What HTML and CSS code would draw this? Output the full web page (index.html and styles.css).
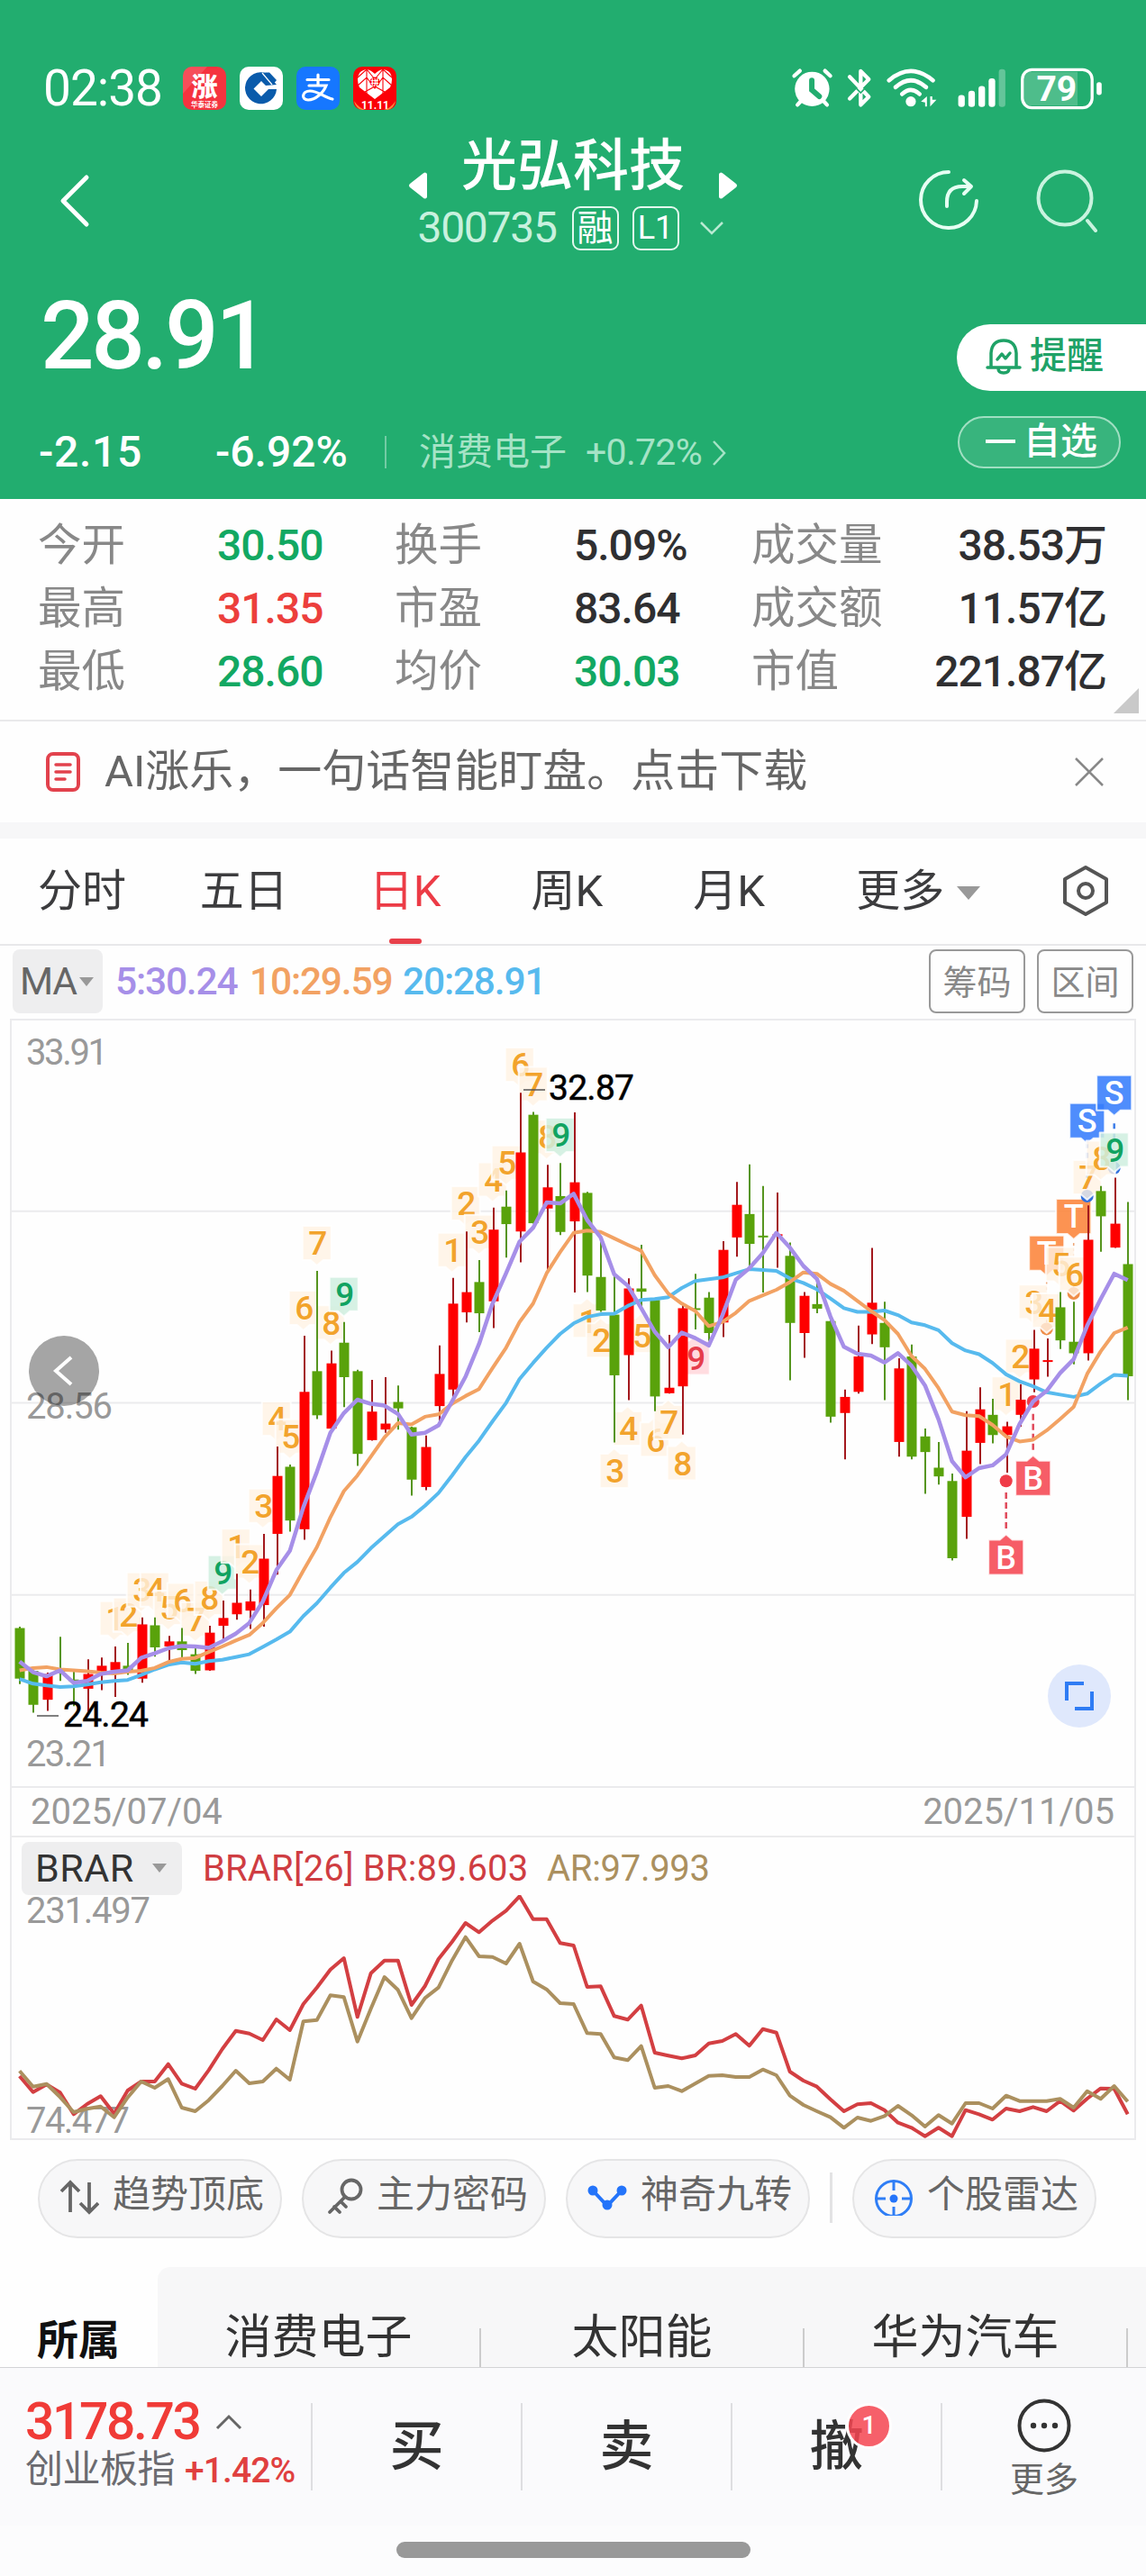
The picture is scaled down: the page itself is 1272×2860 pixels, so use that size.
FILE: index.html
```html
<!DOCTYPE html>
<html lang="zh-CN">

<head>
  <meta charset="UTF-8">
  <meta name="viewport" content="width=device-width, initial-scale=1.0">
  <title>光弘科技 300735</title>
  <link rel="stylesheet" href="styles.css">
</head>

<body>
  <header class="header">
    <div class="status-bar">
      <span class="time">02:38</span>
      <svg class="app-icon" viewBox="0 0 48 48">
        <rect width="48" height="48" rx="10" fill="#f5333f"/>
        <path d="M0 30V10A10 10 0 0 1 10 0H27Z" fill="#fff" opacity=".14"/>
        <text x="24" y="33" font-size="29" font-weight="900" text-anchor="middle" fill="#fff">涨</text>
        <text x="24" y="44.500" font-size="7.500" font-weight="700" text-anchor="middle" fill="#fff">华泰证券</text>
      </svg>
      <svg class="app-icon" viewBox="0 0 48 48">
        <rect width="48" height="48" rx="10" fill="#fff"/>
        <path d="M30 7.500A17.500 17.500 0 1 0 41 25H32L24 33L15.500 24.500L24 16L29 21L41 20Z" fill="#0a5bab"/>
        <path d="M29 6.500H33L41 15L37 20L26 7Z" fill="#0a5bab"/>
        <path d="M25 7L36 20" stroke="#fff" stroke-width="1.200"/>
      </svg>
      <svg class="app-icon" viewBox="0 0 48 48">
        <rect width="48" height="48" rx="10" fill="#1677ff"/>
        <path d="M12 14.500H36M24 9V21M14 21H33C30 29 21 37 13 37C5 37 6 27 15 27C24 27 31 34 40 36" fill="none" stroke="#fff" stroke-width="3.200" stroke-linecap="round"/>
      </svg>
      <svg class="app-icon" viewBox="0 0 48 48">
        <rect width="48" height="48" rx="10" fill="#fb0008"/>
        <path d="M1 38Q6 46 14 48H10Q3 47 1 38ZM47 38Q42 46 34 48H38Q45 47 47 38Z" fill="#ff8a3c"/>
        <path d="M24 36L7 23Q3 14 7 7Q15 -1 24 8Q33 -1 41 7Q45 14 41 23Z" fill="#fff"/>
        <path d="M5 12L15 3L24 14L33 3L43 12M5 21L15 12L24 24L33 12L43 21M13 28L24 22L35 28M15 3V30M33 3V30" fill="none" stroke="#fb0008" stroke-width="1.100"/>
        <circle cx="24" cy="17" r="5.500" fill="#fb0008"/>
        <text x="24" y="20.500" font-size="9" font-weight="700" text-anchor="middle" fill="#fff">拼</text>
        <text x="24.500" y="46.500" font-size="12" font-weight="700" text-anchor="middle" fill="#fff">11.11</text>
      </svg>
      <svg class="system-icons" viewBox="237 76 1041 142">
        <g fill="none" stroke="#fff" stroke-linecap="round" stroke-linejoin="round">
          <path stroke-width="13" d="M244 104L263 87M347 87L365 104M265 190L255 201M344 190L354 201"/>
          <path stroke-width="13" d="M430 107L494 174L467 201V88L494 115L430 180"/>
          <path stroke-width="14" d="M562 119Q635 57 709 119M584 142Q635 96 686 142M606 165Q635 137 664 165"/>
        </g>
        <circle cx="304" cy="148" r="58" fill="#fff"/>
        <path d="M303 119V151L328 173" fill="none" stroke="#22ad6f" stroke-width="18" stroke-linecap="round"/>
        <path d="M452 146L467 161L484 143" stroke="#22ad6f" stroke-width="5" fill="none"/>
        <circle cx="635" cy="190" r="17" fill="#fff"/>
        <path d="M669 190L689 173V207H683V193ZM700 173V207L721 184H707V173Z" fill="#fff"/>
        <g fill="#fff">
          <rect x="794" y="168" width="22" height="40" rx="10"/>
          <rect x="828" y="154" width="22" height="54" rx="10"/>
          <rect x="862" y="138" width="22" height="70" rx="10"/>
          <rect x="896" y="112" width="22" height="96" rx="10"/>
          <rect x="930" y="81" width="22" height="127" rx="10" opacity=".3"/>
          <path d="M1040 90H1194V204H1040Q1014 204 1014 178V116Q1014 90 1040 90Z" opacity=".2"/>
          <rect x="1258" y="125" width="17" height="43" rx="8"/>
        </g>
        <rect x="1009" y="83" width="234" height="128" rx="32" fill="none" stroke="#fff" stroke-width="10"/>
        <text x="1124" y="189" font-size="118" font-weight="700" text-anchor="middle" fill="#fff">79</text>
      </svg>
    </div>

    <div class="title-bar">
      <svg class="back" viewBox="0 0 34 60"><path d="M30 4L4 30L30 56" fill="none" stroke="#fff" stroke-width="5" stroke-linecap="round" stroke-linejoin="round"/></svg>
      <div class="title-center">
        <div class="title-name">
          <svg width="20" height="30" viewBox="0 0 20 30"><path d="M20 2V28Q18 31 15 28L1 17Q-1 15 1 13L15 2Q18-1 20 2Z" fill="#fff"/></svg>
          <h1>光弘科技</h1>
          <svg width="20" height="30" viewBox="0 0 20 30"><path d="M0 2V28Q2 31 5 28L19 17Q21 15 19 13L5 2Q2-1 0 2Z" fill="#fff"/></svg>
        </div>
        <div class="title-code">
          <span>300735</span>
          <b>融</b>
          <b class="level">L1</b>
          <svg width="28" height="16" viewBox="0 0 28 16"><path d="M2 2L14 14L26 2" fill="none" stroke="#b9ead2" stroke-width="2.500"/></svg>
        </div>
      </div>
      <svg class="share" viewBox="0 0 68 68"><path d="M34 3A31 31 0 1 0 65 35M32 41V36Q32 19 49 19H58M51 12L59 19L51 27" fill="none" stroke="#e6fff3" stroke-width="4" stroke-linecap="round" stroke-linejoin="round"/></svg>
      <svg class="search" viewBox="0 0 68 70"><circle cx="32" cy="32" r="29.500" fill="none" stroke="#c9f3df" stroke-width="4"/><path d="M57 57L66 68" stroke="#c9f3df" stroke-width="4" stroke-linecap="round"/></svg>
    </div>

    <div class="quote">
      <div class="price">28.91</div>
      <div class="remind">
        <svg width="40" height="42" viewBox="0 0 40 42"><path d="M6 32V17Q7 3 20 3Q33 3 34 17V32M2 33H38M14 34Q14 39 20 39Q26 39 26 34M13 24L18 18L22 23L27 17" fill="none" stroke="#1fa267" stroke-width="3.500" stroke-linecap="round" stroke-linejoin="round"/></svg>
        <span>提醒</span>
      </div>
    </div>
    <div class="change">
      <span class="diff">-2.15</span>
      <span class="percent">-6.92%</span>
      <span class="industry">消费电子</span>
      <span class="industry-percent">+0.72%</span>
      <svg width="18" height="30" viewBox="0 0 18 30"><path d="M3 2L15 15L3 28" fill="none" stroke="#a5e3c6" stroke-width="2.500"/></svg>
      <div class="favorite"><i></i>自选</div>
    </div>
  </header>

  <section class="stats">
    <span>今开</span><b class="green">30.50</b><span>换手</span><b>5.09%</b><span>成交量</span><b class="last">38.53万</b>
    <span>最高</span><b class="red">31.35</b><span>市盈</span><b>83.64</b><span>成交额</span><b class="last">11.57亿</b>
    <span>最低</span><b class="green">28.60</b><span>均价</span><b class="green">30.03</b><span>市值</span><b class="last">221.87亿</b>
    <i class="corner"></i>
  </section>

  <section class="notice">
    <svg width="38" height="44" viewBox="0 0 38 44"><rect x="2" y="2" width="34" height="40" rx="6" fill="none" stroke="#e2424d" stroke-width="4"/><path d="M11 14H27M11 22H27M11 30H21" stroke="#e2424d" stroke-width="3.500" stroke-linecap="round"/></svg>
    <p>AI涨乐，一句话智能盯盘。点击下载</p>
    <svg width="32" height="32" viewBox="0 0 32 32"><path d="M1 1L31 31M31 1L1 31" stroke="#888" stroke-width="2.500"/></svg>
  </section>

  <nav class="tabs">
    <a>分时</a>
    <a>五日</a>
    <a class="active">日K</a>
    <a>周K</a>
    <a>月K</a>
    <a>更多<i class="caret"></i></a>
    <svg width="54" height="58" viewBox="0 0 54 58"><path d="M27 3L50 16V42L27 55L4 42V16Z" fill="none" stroke="#555" stroke-width="4" stroke-linejoin="round"/><circle cx="27" cy="29" r="8" fill="none" stroke="#555" stroke-width="4"/></svg>
  </nav>

  <div class="ma-bar">
    <span class="ma-select">MA<i class="caret small"></i></span>
    <span class="ma5">5:30.24</span>
    <span class="ma10">10:29.59</span>
    <span class="ma20">20:28.91</span>
    <button class="first">筹码</button>
    <button>区间</button>
  </div>

  <main class="charts">
    <svg id="kline" class="kline" viewBox="13 1133 1246 850"></svg>
    <div class="dates"><span>2025/07/04</span><span>2025/11/05</span></div>
    <div class="brar">
      <div class="brar-head">
        <span class="brar-select">BRAR<i class="caret small"></i></span>
        <span class="br">BRAR[26] BR:89.603</span>
        <span class="ar">AR:97.993</span>
      </div>
      <svg id="brar" class="brar-chart" viewBox="13 2104 1246 270"></svg>
    </div>
  </main>

  <section class="tools">
    <a>
      <svg width="44" height="44" viewBox="0 0 44 44"><path d="M12 40V7M2 17L12 7L22 17M33 7V40M23 30L33 40L43 30" fill="none" stroke="#666" stroke-width="3.800"/></svg>
      趋势顶底
    </a>
    <a>
      <svg width="44" height="44" viewBox="0 0 44 44"><circle cx="31" cy="15" r="10.500" fill="none" stroke="#666" stroke-width="3.800"/><path d="M24 23L7 40M12 34L18 40M19 28L25 34" fill="none" stroke="#666" stroke-width="3.800" stroke-linecap="round"/></svg>
      主力密码
    </a>
    <a>
      <svg width="44" height="44" viewBox="0 0 44 44"><path d="M6 16L22 33L38 16" fill="none" stroke="#2474fa" stroke-width="4"/><g fill="#2474fa"><circle cx="6" cy="16" r="5.500"/><circle cx="38" cy="16" r="5.500"/><circle cx="22" cy="32" r="5.500"/></g></svg>
      神奇九转
    </a>
    <i></i>
    <a>
      <svg width="44" height="44" viewBox="0 0 44 44"><circle cx="22" cy="25" r="19.500" fill="none" stroke="#2f7ef6" stroke-width="3"/><path d="M22 6V16M22 34V44M3 25H13M31 25H41" stroke="#2f7ef6" stroke-width="3"/><circle cx="22" cy="25" r="4.500" fill="#2474fa"/></svg>
      个股雷达
    </a>
  </section>

  <section class="concepts">
    <h2>所属</h2>
    <div class="concept-list">
      <a>消费电子</a>
      <a>太阳能</a>
      <a>华为汽车</a>
    </div>
  </section>

  <footer class="trade-bar">
    <div class="index">
      <div class="index-value">3178.73<svg width="30" height="18" viewBox="0 0 30 18"><path d="M2 16L15 3L28 16" fill="none" stroke="#666" stroke-width="3"/></svg></div>
      <div class="index-name">创业板指 <span>+1.42%</span></div>
    </div>
    <a>买</a>
    <a>卖</a>
    <a>撤<em>1</em></a>
    <div class="more">
      <svg width="60" height="60" viewBox="0 0 60 60"><circle cx="30" cy="30" r="27.500" fill="none" stroke="#333" stroke-width="4"/><circle cx="18" cy="30" r="3.200" fill="#333"/><circle cx="30" cy="30" r="3.200" fill="#333"/><circle cx="42" cy="30" r="3.200" fill="#333"/></svg>
      <span>更多</span>
    </div>
  </footer>
  <div class="home"><i></i></div>

  <script src="chart.js"></script>
</body>

</html>
```

FILE: styles.css
```css
* {
  margin: 0;
  padding: 0;
  box-sizing: border-box;
  font-family: Roboto, "Noto Sans CJK SC", sans-serif;
}

body {
  width: 1272px;
  background-color: #fefefe;
  color: #333;
}

svg {
  display: block;
  flex: none;
}

i, em {
  font-style: normal;
}

/* Header */
.header {
  height: 554px;
  background-color: #22ad6f;
  color: #fff;
}

.status-bar {
  display: flex;
  align-items: center;
  height: 147px;
  padding: 49px 47px 0 48px;
}

.time {
  width: 155px;
  font-size: 55px;
  line-height: 60px;
  letter-spacing: -1px;
}

.app-icon {
  width: 48px;
  height: 48px;
  margin-right: 15px;
}

.system-icons {
  width: 347px;
  height: 47px;
  margin-left: auto;
}

.title-bar {
  display: flex;
  height: 150px;
  padding-left: 66px;
}

.back {
  width: 34px;
  height: 60px;
  margin-top: 46px;
}

.title-center {
  display: flex;
  flex-direction: column;
  align-items: center;
  width: 724px;
  padding-left: 348px;
}

.title-name {
  display: flex;
  align-items: center;
  gap: 38px;
}

.title-name svg {
  margin-top: 42px;
}

.title-name h1 {
  font-size: 62px;
  line-height: 76px;
  font-weight: 500;
  white-space: nowrap;
}

.title-code {
  display: flex;
  align-items: center;
  margin-top: 5px;
  padding-right: 5px;
}

.title-code span {
  width: 171px;
  font-size: 48px;
  line-height: 50px;
  letter-spacing: -1.3px;
  color: #c8f1de;
}

.title-code b {
  width: 52px;
  height: 49px;
  margin-right: 15px;
  border: 2px solid #e3f8ee;
  border-radius: 9px;
  font-size: 40px;
  line-height: 45px;
  font-weight: 400;
  text-align: center;
}

.title-code .level {
  font-size: 36px;
}

.title-code svg {
  margin-left: 7px;
}

.share {
  width: 68px;
  height: 68px;
  margin: 41px 0 0 195px;
}

.search {
  width: 68px;
  height: 70px;
  margin: 41px 0 0 63px;
}

.quote {
  display: flex;
  justify-content: space-between;
  height: 165px;
  padding-left: 45px;
}

.price {
  margin-top: 17px;
  font-size: 105px;
  line-height: 120px;
  font-weight: 500;
  letter-spacing: -3.5px;
}

.remind {
  display: flex;
  align-items: center;
  gap: 9px;
  width: 210px;
  height: 74px;
  margin-top: 63px;
  padding: 0 0 2px 32px;
  border-radius: 37px 0 0 37px;
  background-color: #fff;
  color: #1fa267;
  font-size: 41px;
  line-height: 60px;
  font-weight: 500;
}

.remind span {
  margin-top: -2px;
}

.change {
  display: flex;
  align-items: center;
  height: 58px;
  padding-left: 43px;
  line-height: 58px;
}

.change svg {
  margin: 23px 0 0 10px;
}

.diff,
.percent {
  width: 196px;
  padding-top: 21px;
  font-size: 48px;
  font-weight: 500;
  letter-spacing: .7px;
}

.percent {
  width: 188px;
  letter-spacing: 0;
}

.industry {
  width: 223px;
  margin-top: 21px;
  padding-left: 36px;
  border-left: 2px solid #73cba4;
  font-size: 41px;
  line-height: 36px;
  color: #a5e3c6;
}

.industry-percent {
  margin-top: 21px;
  font-size: 41px;
  letter-spacing: -.7px;
  color: #a5e3c6;
}

.favorite {
  display: flex;
  align-items: center;
  gap: 9px;
  width: 181px;
  height: 58px;
  margin: 0 28px 0 auto;
  padding: 0 0 2px 29px;
  border: 2px solid #a0dfc2;
  border-radius: 29px;
  background-color: #38b47d;
  font-size: 41px;
  line-height: 52px;
  font-weight: 500;
}

.favorite i {
  width: 33px;
  height: 4px;
  background-color: #fff;
}

/* Quote details */
.stats {
  position: relative;
  display: grid;
  grid-template-columns: 199px 197px 199px 197px 160px 234px;
  grid-auto-rows: 70px;
  height: 247px;
  padding: 17px 44px 0 42px;
  border-bottom: 2px solid #e9e9eb;
  font-size: 48.5px;
  line-height: 70px;
}

.stats span {
  color: #888;
}

.stats b {
  font-size: 48px;
  font-weight: 500;
  letter-spacing: -1px;
  color: #2f2f31;
}

.stats .green {
  color: #12a862;
}

.stats .red {
  color: #ec3f3c;
}

.stats .last {
  text-align: right;
}

.corner {
  position: absolute;
  right: 8px;
  bottom: 7px;
  border: 14px solid #c9c9c9;
  border-top-color: transparent;
  border-left-color: transparent;
}

.notice {
  display: flex;
  align-items: center;
  height: 112px;
  padding: 0 47px 0 51px;
  color: #666;
}

.notice p {
  flex: 1;
  margin-left: 27px;
  font-size: 49px;
  line-height: 70px;
}

.tabs {
  display: flex;
  height: 137px;
  padding: 0 40px 0 42px;
  border-top: 18px solid #f7f7f8;
  border-bottom: 2px solid #e8e8ea;
  font-size: 49px;
  line-height: 118px;
  color: #3c3c3e;
}

.tabs a {
  position: relative;
  width: 180px;
  white-space: nowrap;
}

.tabs a:nth-child(2) {
  width: 188px;
}

.tabs a:nth-child(5) {
  width: 181px;
}

.tabs a:nth-child(6) {
  display: flex;
  align-items: center;
  width: 228px;
}

.tabs .active {
  color: #ec3b46;
}

.tabs .active::after {
  content: "";
  position: absolute;
  left: 22px;
  bottom: 0;
  width: 36px;
  height: 6px;
  border-radius: 3px;
  background-color: #e8404a;
}

.tabs svg {
  margin: 29px 0 0 auto;
}

.caret {
  width: 26px;
  margin: 4px 0 0 14px;
  border: 13px solid transparent;
  border-top: 15px solid #999;
  border-bottom: 0;
}

.caret.small {
  width: 16px;
  margin: 0 0 0 3px;
  border-width: 10px 8px 0;
}

.ma-bar {
  display: flex;
  align-items: center;
  height: 81px;
  padding: 0 14px 2px;
  font-size: 42.5px;
  font-weight: 500;
  letter-spacing: -1.2px;
}

.ma-select,
.brar-select {
  display: flex;
  align-items: center;
  width: 100px;
  height: 71px;
  margin-right: 14px;
  padding-left: 8px;
  border-radius: 8px;
  background-color: #eeeeef;
  font-weight: 400;
  color: #666;
}

.ma5 {
  width: 149px;
  color: #a68fe8;
}

.ma10 {
  width: 170px;
  color: #f2a263;
}

.ma20 {
  color: #57baee;
}

.ma-bar button {
  width: 107px;
  height: 71px;
  margin-left: 13px;
  padding-bottom: 4px;
  border: 2px solid #999;
  border-radius: 8px;
  background: none;
  font-size: 38px;
  color: #888;
}

.ma-bar .first {
  margin-left: auto;
}

/* Charts */
.charts {
  width: 1250px;
  margin-left: 11px;
  border: 2px solid #ebebed;
}

.kline {
  width: 1246px;
  height: 850px;
}

.kline .axis,
.brar-chart .axis {
  font-size: 40px;
  fill: #999;
}

.dates {
  display: flex;
  justify-content: space-between;
  height: 57px;
  padding: 0 22px 0 21px;
  border-top: 2px solid #ebebed;
  border-bottom: 2px solid #ebebed;
  font-size: 40px;
  line-height: 54px;
  color: #999;
}

.brar-head {
  display: flex;
  align-items: center;
  height: 64px;
  padding: 4px 0 0 11px;
  font-size: 40px;
  letter-spacing: .15px;
  color: #cf3d42;
}

.brar-select {
  width: 178px;
  height: 59px;
  margin-right: 23px;
  padding-left: 15px;
  font-size: 43px;
  letter-spacing: .5px;
  color: #333;
}

.brar-select .caret {
  margin-left: 20px;
}

.br {
  width: 382px;
}

.ar {
  letter-spacing: -.3px;
  color: #ab905f;
}

.brar-chart {
  width: 1246px;
  height: 270px;
}

/* Tool pills */
.tools {
  display: flex;
  gap: 22px;
  height: 141px;
  padding: 21px 0 0 42px;
}

.tools a {
  display: flex;
  width: 271px;
  height: 88px;
  padding-left: 22px;
  border: 2px solid #e5e5e6;
  border-radius: 44px;
  background-color: #f7f7f8;
  font-size: 42px;
  line-height: 76px;
  color: #666;
  white-space: nowrap;
}

.tools a svg {
  margin: 17px 15px 0 0;
}

.tools > i {
  width: 3px;
  height: 56px;
  margin-top: 15px;
  background-color: #e3e3e4;
}

.concepts {
  display: flex;
  height: 111px;
}

.concepts h2 {
  width: 175px;
  padding: 51px 0 0 41px;
  font-size: 46px;
  line-height: 60px;
  font-weight: 700;
  color: #111;
}

.concept-list {
  display: flex;
  flex: 1;
  border-radius: 14px 0 0 0;
  background-color: #f7f7f8;
}

.concept-list a {
  position: relative;
  width: 359px;
  line-height: 157px;
  height: 111px;
  padding-right: 2px;
  font-size: 52px;
  text-align: center;
}

.concept-list a::after {
  content: "";
  position: absolute;
  right: 0;
  bottom: 0;
  width: 2px;
  height: 43px;
  background-color: #ccc;
}

/* Bottom bar */
.trade-bar {
  display: flex;
  height: 176px;
  padding-top: 39px;
  border-top: 1px solid #d3d3d6;
  background-color: #fafafc;
}

.index {
  width: 345px;
  padding-left: 28px;
}

.index-value {
  display: flex;
  align-items: center;
  gap: 18px;
  font-size: 57px;
  line-height: 42px;
  font-weight: 500;
  letter-spacing: -2.4px;
  color: #f03b37;
}

.index-name {
  margin-top: 6px;
  font-size: 42px;
  line-height: 52px;
  letter-spacing: -.5px;
  color: #6b6b70;
  white-space: nowrap;
}

.index-name span {
  margin-left: 1px;
  font-size: 39px;
  font-weight: 500;
  letter-spacing: -.9px;
  color: #e0403f;
}

.trade-bar a {
  position: relative;
  width: 233px;
  height: 97px;
  border-left: 2px solid #dedee1;
  font-size: 60px;
  line-height: 98px;
  font-weight: 500;
  text-align: center;
}

.trade-bar em {
  position: absolute;
  left: 126px;
  top: 0;
  width: 51px;
  height: 51px;
  border: 3px solid #fff;
  border-radius: 50%;
  background-color: rgba(245, 70, 82, .86);
  font-size: 28px;
  line-height: 44px;
  color: #fff;
}

.more {
  display: flex;
  flex-direction: column;
  align-items: center;
  width: 228px;
  height: 97px;
  border-left: 2px solid #dedee1;
  font-size: 38px;
  line-height: 50px;
  color: #666;
}

.more svg {
  margin: -5px 0 5px;
}

.home {
  display: flex;
  justify-content: center;
  height: 56px;
  padding-top: 18px;
  background-color: #fcfcfd;
}

.home i {
  width: 393px;
  height: 18px;
  border-radius: 9px;
  background-color: #999;
}
```

FILE: chart.js
```js
// [up, high, bodyTop, bodyBottom, low], measured down from the top of the chart
const candles = [
  [0,1325,1328,1438,1450],[0,1420,1421,1495,1512],[1,1425,1428,1484,1508],[0,1347,1419,1421,1443],[0,1420,1440,1443,1498],
  [1,1396,1428,1460,1510],[1,1392,1410,1425,1463],[1,1368,1402,1420,1478],[0,1360,1410,1422,1430],[1,1305,1320,1438,1447],
  [0,1305,1322,1370,1390],[1,1345,1357,1368,1400],[0,1328,1357,1376,1392],[0,1370,1385,1421,1428],[1,1323,1338,1420,1421],
  [1,1268,1306,1323,1355],[1,1210,1273,1298,1310],[1,1244,1270,1290,1330],[1,1123,1177,1278,1325],[1,933,997,1123,1212],
  [0,972,977,1094,1118],[1,692,814,1113,1136],[0,551,769,865,873],[1,724,752,894,895],[0,662,707,782,847],
  [0,766,769,949,975],[1,788,857,919,920],[1,782,883,896,903],[0,800,836,850,896],[0,890,891,1005,1040],
  [1,909,934,1021,1028],[1,713,775,845,885],[1,566,622,809,825],[1,465,597,641,663],[0,527,575,643,684],
  [1,413,461,617,675],[0,376,411,449,522],[1,163,293,465,532],[0,205,211,447,448],[1,320,369,415,550],
  [0,316,388,466,473],[1,206,358,443,598],[0,379,381,561,597],[0,475,564,637,640],[0,560,646,778,924],
  [1,567,589,734,832],[0,494,589,596,630],[0,612,614,824,856],[1,690,805,817,818],[1,620,632,802,907],
  [0,557,632,633,678],[0,597,609,686,703],[1,486,505,663,695],[1,357,407,478,520],[0,319,427,492,545],
  [0,366,474,478,598],[1,380,471,474,544],[0,489,518,664,789],[1,597,605,686,740],[0,570,623,633,643],
  [0,650,660,868,881],[1,809,825,860,961],[1,670,737,814,818],[1,501,620,689,710],[0,618,664,717,832],
  [1,741,763,923,955],[0,711,737,955,961],[0,894,911,945,1036],[0,923,979,998,1016],[0,992,1008,1176,1181],
  [1,856,942,1086,1134],[1,804,852,925,971],[0,829,864,908,926],[1,879,889,908,990],[1,797,831,864,890],
  [1,679,720,787,815],[1,698,745,748,781],[0,597,630,702,721],[0,618,705,730,754],[1,408,483,730,746],
  [0,366,377,432,509],[1,348,448,500,501],[0,401,536,780,832]
];

const ma5 = [1401,1424,1433,1420,1447,1443,1428,1423,1420,1393,1383,1372,1367,1368,1371,1357,1340,1317,1270,1202,1160,1065,988,903,860,831,840,844,862,907,903,887,835,781,710,622,556,487,457,402,404,383,440,478,558,583,632,683,717,685,697,713,648,570,545,512,468,500,540,568,650,716,731,735,750,730,757,800,874,965,1000,980,974,950,884,835,812,773,743,670,612,557,571];
const ma10 = [1420,1415,1413,1418,1420,1422,1425,1427,1423,1421,1415,1402,1395,1393,1380,1368,1355,1343,1317,1285,1256,1203,1152,1087,1030,996,955,913,882,885,868,863,840,823,808,762,718,662,622,556,510,468,463,466,480,494,507,560,600,622,638,671,662,642,616,604,592,575,554,557,579,594,616,638,658,688,736,764,806,857,865,867,886,911,922,918,898,873,847,775,726,686,674];
const ma20 = [1439,1449,1453,1456,1455,1451,1446,1443,1441,1430,1418,1408,1403,1406,1400,1397,1391,1385,1369,1353,1336,1302,1274,1240,1208,1184,1154,1128,1102,1086,1062,1034,996,956,920,878,838,786,751,718,688,665,651,645,644,627,614,612,608,588,573,569,565,556,547,549,551,567,577,591,611,632,640,640,637,647,663,669,680,708,724,732,751,776,791,802,815,820,825,818,796,777,779];

const br = [1155,1208,1183,1210,1282,1248,1222,1280,1203,1173,1173,1115,1180,1197,1135,1065,1004,1013,1035,966,1002,915,860,800,762,958,812,770,770,918,855,765,708,645,676,637,604,556,632,632,712,720,858,856,955,967,920,1077,1087,1096,1086,1046,1038,1015,1054,998,1010,1140,1170,1190,1232,1272,1249,1245,1268,1310,1327,1355,1327,1355,1268,1282,1300,1263,1272,1258,1272,1238,1270,1230,1196,1197,1282];
const ar = [1138,1190,1181,1225,1275,1264,1256,1292,1226,1173,1194,1165,1260,1272,1235,1188,1137,1179,1173,1130,1167,973,968,886,892,1040,930,825,868,962,895,860,770,692,756,758,780,714,840,866,912,915,1012,1015,1093,1102,1055,1194,1188,1205,1180,1154,1152,1158,1158,1133,1152,1220,1251,1272,1292,1327,1293,1304,1288,1254,1285,1323,1285,1313,1245,1245,1263,1220,1238,1238,1238,1231,1260,1205,1231,1188,1240];

const X = i => 21.7 + 15 * i;
const Y = v => 1130 + v / 1.96;

function line(data, color, scale, width) {
  const points = data.map((v, i) => `${X(i)},${scale(v).toFixed(1)}`).join(' ');
  return `<polyline points="${points}" fill="none" stroke="${color}" stroke-width="${width}" stroke-linejoin="round"/>`;
}

// rectangular label with a small pointer, tip is the end of the pointer
function badge(x, tip, text, w, h, bg, color, size, below) {
  const d = below ? 1 : -1;
  const a = tip + 6 * d;
  const b = a + h * d;
  const base = (a + b) / 2 + size * 0.36;
  return `<path d="M${x - w / 2} ${b}V${a}H${x - 7}L${x} ${tip}L${x + 7} ${a}H${x + w / 2}V${b}Z" fill="${bg}" stroke="#fff" stroke-opacity=".8" stroke-width="2" stroke-linejoin="round"/>
    <text x="${x + (w < 35 ? 1 : 0)}" y="${base}" font-size="${size}" font-weight="500" text-anchor="middle" fill="${color}">${text}</text>`;
}

function nineTurn(start, below) {
  let out = '';
  for (let n = 1; n <= 9; n++) {
    const c = candles[start + n - 1];
    const tip = below ? Y(c[4] + 13) : Y(c[1] - 12);
    let bg = 'rgba(255,242,228,.8)', color = '#f2a32c';
    if (n === 9) {
      bg = below ? 'rgba(255,214,219,.85)' : 'rgba(207,238,223,.85)';
      color = below ? '#e63c4b' : '#11a361';
    }
    out += badge(X(start + n - 1), tip, n, 32, 38, bg, color, 37, below);
  }
  return out;
}

function drawKline() {
  let out = '';
  for (const v of [421, 838, 1256]) {
    out += `<path d="M12 ${Y(v)}H1260" stroke="#ebebed" stroke-width="2"/>`;
  }
  out += '<text class="axis" x="29" y="1182" textLength="91">33.91</text>';
  out += '<text class="axis" x="29" y="1575" textLength="96">28.56</text>';
  out += '<text class="axis" x="29" y="1961" textLength="94">23.21</text>';

  // trades
  out += `<path d="M${X(79)} ${Y(272)}V${Y(375)}M${X(81)} ${Y(230)}V${Y(320)}" stroke="#3d7de8" stroke-width="2.5" stroke-dasharray="6 5"/>`;
  out += `<path d="M${X(76)} ${Y(575)}V${Y(668)}M${X(78)} ${Y(490)}V${Y(590)}" stroke="#eda577" stroke-width="1.5" stroke-dasharray="3 3"/>`;
  out += `<path d="M${X(73)} ${Y(1033)}V${Y(1115)}M${X(75)} ${Y(862)}V${Y(945)}" stroke="#e0495a" stroke-width="2.5" stroke-dasharray="7 4"/>`;
  out += badge(X(76), Y(562), 'T', 39, 39, 'rgba(252,132,58,.88)', '#fff', 36);
  out += badge(X(78), Y(482), 'T', 39, 39, 'rgba(252,132,58,.88)', '#fff', 36);
  out += badge(X(79), Y(274), 'S', 39, 39, 'rgba(55,125,252,.88)', '#fff', 36);
  out += badge(X(81), Y(213), 'S', 39, 39, 'rgba(55,125,252,.88)', '#fff', 36);
  out += badge(X(73), Y(1124), 'B', 39, 39, 'rgba(245,75,87,.9)', '#fff', 36, true);
  out += badge(X(75), Y(952), 'B', 39, 39, 'rgba(245,75,87,.9)', '#fff', 36, true);
  for (const [i, v, color] of [[76, 677, '#ef8d48'], [78, 600, '#ef8d48'], [79, 388, '#2f6fdd'], [81, 327, '#2f6fdd'], [73, 1008, '#f03c48'], [75, 835, '#f03c48']]) {
    out += `<circle cx="${X(i)}" cy="${Y(v)}" r="7" fill="${color}"/>`;
  }

  out += nineTurn(7) + nineTurn(16) + nineTurn(32) + nineTurn(42, true) + nineTurn(73);

  candles.forEach(([up, high, top, bottom, low], i) => {
    const x = 22 + 15 * i + up;
    const h = Math.max((bottom - top) / 1.96, 2);
    out += `<path d="M${x} ${Y(high)}V${Y(low)}" stroke="${up ? '#a3191e' : '#56951f'}" stroke-width="2"/>`;
    out += `<rect x="${x - 5.5}" y="${Y(top)}" width="11" height="${h}" fill="${up ? '#fe0000' : '#59a20b'}"/>`;
  });

  out += line(ma20, '#57baee', Y, 4) + line(ma10, '#f2a263', Y, 4) + line(ma5, '#a68fe8', Y, 4.5);

  out += '<path d="M41 1905H65M581 1210H605" stroke="#555" stroke-width="1.5"/>';
  out += '<text x="70" y="1916.5" font-size="39" fill="#000" stroke="#000" stroke-width=".5" textLength="95">24.24</text>';
  out += '<text x="609" y="1221" font-size="39" fill="#000" stroke="#000" stroke-width=".5" textLength="95">32.87</text>';

  // scroll and expand buttons
  out += '<circle cx="71" cy="1522" r="39" fill="#000" opacity=".35"/><path d="M79 1507L62 1522L79 1537" fill="none" stroke="#fff" stroke-width="4"/>';
  out += '<circle cx="1198" cy="1883" r="35" fill="#dfe8fc"/><path d="M1184 1888V1869H1203M1193 1897H1212V1878" fill="none" stroke="#2f7cf4" stroke-width="4"/>';
  document.getElementById('kline').innerHTML = out;
}

function drawBrar() {
  const scale = v => 1920 + v / 3;
  document.getElementById('brar').innerHTML =
    '<text class="axis" x="29" y="2135" textLength="138">231.497</text>' +
    '<text class="axis" x="29" y="2368" textLength="115">74.477</text>' +
    line(br, '#d33f42', scale, 4) + line(ar, '#ab905f', scale, 4);
}

drawKline();
drawBrar();
```
